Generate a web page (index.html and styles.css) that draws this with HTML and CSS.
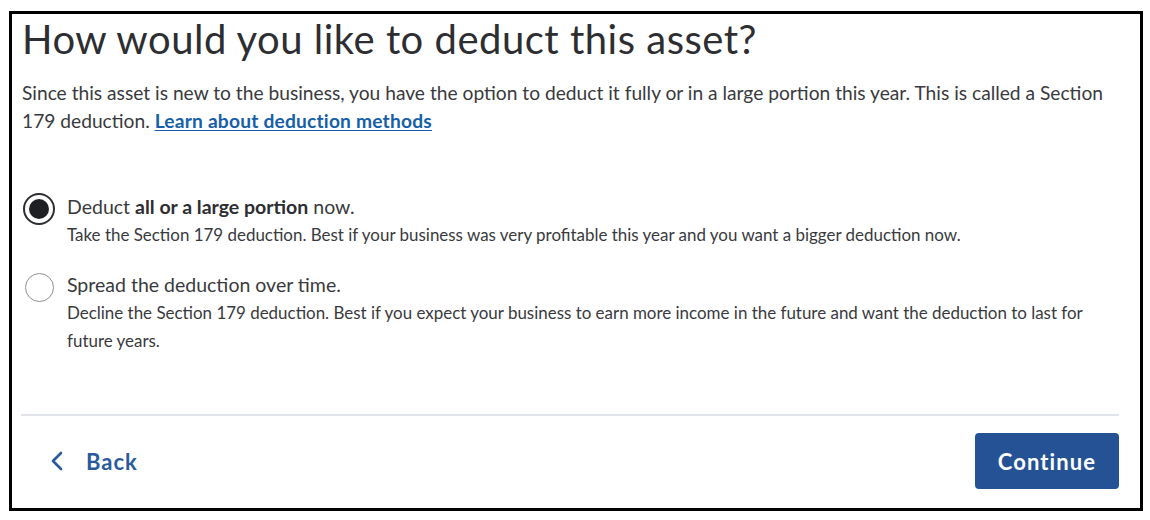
FILE: index.html
```html
<!DOCTYPE html>
<html lang="en">
<head>
<meta charset="utf-8">
<title>Deduct asset</title>
<link rel="stylesheet" href="styles.css">
</head>
<body>
<div class="frame">
  <h1 class="title">How would you like to deduct this asset?</h1>
  <p class="intro">Since this asset is new to the business, you have the option to deduct it fully or in a large portion this year. This is called a Section 179 deduction. <a class="link" href="#">Learn about deduction methods</a></p>
  <div class="options">
    <label class="option">
      <span class="radio-wrap"><span class="radio radio-on"><span class="dot"></span></span></span>
      <span class="opt-text">
        <span class="opt-title">Deduct <b>all or a large portion</b> now.</span>
        <span class="opt-desc">Take the Section 179 deduction. Best if your business was very profitable this year and you want a bigger deduction now.</span>
      </span>
    </label>
    <label class="option">
      <span class="radio-wrap"><span class="radio"></span></span>
      <span class="opt-text">
        <span class="opt-title">Spread the deduction over time.</span>
        <span class="opt-desc">Decline the Section 179 deduction. Best if you expect your business to earn more income in the future and want the deduction to last for future years.</span>
      </span>
    </label>
  </div>
  <div class="divider"></div>
  <div class="footer">
    <a class="back" href="#">
      <svg class="chev" width="14" height="20" viewBox="0 0 14 20"><path d="M11 2 L3 10 L11 18" fill="none" stroke="#2a5a9c" stroke-width="2.6" stroke-linecap="round" stroke-linejoin="round"/></svg>
      <span>Back</span>
    </a>
    <button class="continue">Continue</button>
  </div>
</div>
</body>
</html>
```
FILE: styles.css
```css
* { box-sizing: border-box; }
body {
  margin: 0;
  background: #fff;
  font-family: Lato, "Noto Sans", sans-serif;
  color: #393a3d;
}
.frame {
  margin: 11px 0 0 9px;
  width: 1134px;
  height: 500px;
  border: 3px solid #000;
  padding: 0 21px 0 10px;
  display: flex;
  flex-direction: column;
}
.title {
  margin: 3px 0 0;
  font-size: 40px;
  font-weight: 400;
  line-height: 44px;
  color: #2d2e31;
  letter-spacing: 0.5px;
}
.intro {
  margin: 18px 0 0;
  font-size: 19.2px;
  line-height: 28px;
  color: #393a3d;
}
.link {
  color: #1560a8;
  font-weight: 700;
  letter-spacing: 0.2px;
  text-decoration: underline;
  text-underline-offset: 2px;
}
.options {
  margin-top: 58px;
  display: flex;
  flex-direction: column;
  gap: 22px;
}
.option {
  display: flex;
  align-items: flex-start;
  gap: 12px;
}
.radio-wrap {
  flex: none;
  width: 32px;
  height: 32px;
  margin-left: 1px;
  display: flex;
  align-items: center;
  justify-content: center;
}
.radio {
  width: 29px;
  height: 29px;
  border-radius: 50%;
  border: 1.5px solid #8d9096;
  display: flex;
  align-items: center;
  justify-content: center;
}
.radio-on {
  width: 32px;
  height: 32px;
  border: 2.5px solid #2d2e31;
}
.dot {
  width: 20px;
  height: 20px;
  border-radius: 50%;
  background: #1f2023;
}
.opt-text {
  display: flex;
  flex-direction: column;
}
.opt-title {
  font-size: 19.5px;
  line-height: 28px;
  color: #393a3d;
}
.opt-title b { font-weight: 700; color: #2d2e31; }
.opt-desc {
  font-size: 16.95px;
  line-height: 28px;
  color: #393a3d;
}
.divider {
  margin-top: auto;
  height: 2px;
  background: #e1e5ea;
  margin-left: -1px;
}
.footer {
  display: flex;
  align-items: center;
  justify-content: space-between;
  padding: 17px 0 19px;
}
.back {
  display: flex;
  align-items: center;
  gap: 22px;
  margin-left: 28px;
  color: #2a5a9c;
  font-size: 22px;
  font-weight: 700;
  letter-spacing: 1px;
  text-decoration: none;
}
.continue {
  width: 144px;
  height: 56px;
  border: none;
  border-radius: 4px;
  background: #245294;
  color: #fff;
  font-family: inherit;
  font-size: 22px;
  font-weight: 700;
  letter-spacing: 1.1px;
}
```
